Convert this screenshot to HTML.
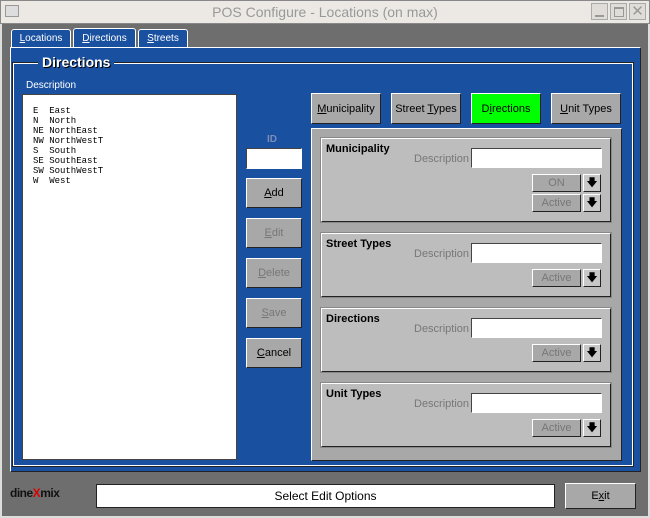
<!DOCTYPE html><html><head><style>
*{box-sizing:border-box;margin:0;padding:0}
body{width:650px;height:518px;overflow:hidden;background:#6e6e6e;font-family:"Liberation Sans",sans-serif;position:relative}
.a{position:absolute}
.btn{position:absolute;background:#a8a8a8;border:1px solid;border-color:#fff #222 #222 #fff;font-size:11px;text-align:center;color:#000;display:flex;align-items:center;justify-content:center}
.dis{color:#777}
.inp{position:absolute;background:#fff;border:1px solid;border-color:#444 #fff #fff #444}
.sec{position:absolute;left:321px;width:290px;border:1px solid;border-color:#fff #222 #222 #fff;background:#bdbdbd;outline:1px solid #888}
.sec b{position:absolute;left:4px;top:4px;font-size:11px}
.sec .d{position:absolute;left:92px;font-size:11px;color:#777}
.arr{position:absolute;width:18px;height:18px;background:#c8c8c8;border:1px solid;border-color:#fff #222 #222 #fff;font-size:11px;text-align:center;line-height:16px}
u{text-decoration:underline}
</style></head><body>
<div class="a" style="left:0;top:0;width:650px;height:24px;background:#ece9e4;border:1px solid #888"></div>
<div class="a" style="left:5px;top:5px;width:14px;height:12px;border:1px solid #999;background:#ddd"></div>
<div class="a" style="left:0;top:4px;width:650px;text-align:center;font-size:14px;color:#999">POS Configure - Locations (on max)</div>
<div class="a" style="left:591px;top:3px;width:17px;height:17px;border:1px solid #aaa;background:#e0ddd8"><div class="a" style="left:3px;top:11px;width:9px;height:2px;background:#999"></div></div>
<div class="a" style="left:610px;top:3px;width:17px;height:17px;border:1px solid #aaa;background:#e0ddd8"><div class="a" style="left:3px;top:3px;width:10px;height:10px;border:1px solid #999;border-top-width:2px"></div></div>
<div class="a" style="left:629px;top:3px;width:17px;height:17px;border:1px solid #aaa;background:#e0ddd8;color:#999;font-size:15px;text-align:center;line-height:15px">✕</div>
<div class="a" style="left:0;top:24px;width:2px;height:494px;background:#ddd"></div>
<div class="a" style="left:648px;top:24px;width:2px;height:494px;background:#ddd"></div>
<div class="a" style="left:0;top:516px;width:650px;height:2px;background:#ddd"></div>
<!-- tabs -->
<div class="a" style="left:11px;top:29px;width:60px;height:19px;background:#1a50a0;border:1px solid #fff;border-bottom:none;border-radius:3px 3px 0 0;color:#fff;font-size:10px;text-align:center;line-height:18px"><u>L</u>ocations</div>
<div class="a" style="left:73px;top:28px;width:63px;height:20px;background:#1a50a0;border:1px solid #fff;border-bottom:none;border-radius:3px 3px 0 0;color:#fff;font-size:10px;text-align:center;line-height:20px"><u>D</u>irections</div>
<div class="a" style="left:138px;top:29px;width:50px;height:19px;background:#1a50a0;border:1px solid #fff;border-bottom:none;border-radius:3px 3px 0 0;color:#fff;font-size:10px;text-align:center;line-height:18px"><u>S</u>treets</div>
<div class="a" style="left:10px;top:47px;width:631px;height:425px;background:#1a50a0;border:1px solid #fff;border-right-color:#222;border-bottom-color:#222"></div>
<div class="a" style="left:13px;top:63px;width:620px;height:403px;border:1px solid #fff;outline:1px solid #222"></div>
<div class="a" style="left:38px;top:54px;background:#1a50a0;padding:0 4px;color:#fff;font-weight:bold;font-size:14px;text-shadow:1px 1px 0 #000">Directions</div>
<div class="a" style="left:26px;top:80px;color:#fff;font-size:10px">Description</div>
<div class="a" style="left:22px;top:94px;width:215px;height:366px;background:#fff;border:1px solid #444;font-family:'Liberation Mono',monospace;font-size:9px;line-height:10px;padding:11px 0 0 10px;white-space:pre">E  East
N  North
NE NorthEast
NW NorthWestT
S  South
SE SouthEast
SW SouthWestT
W  West</div>
<div class="a" style="left:267px;top:134px;color:#7a8fb8;font-size:10px;font-weight:bold">ID</div>
<div class="inp" style="left:246px;top:148px;width:56px;height:21px"></div>
<div class="btn" style="left:246px;top:178px;width:56px;height:30px"><span><u>A</u>dd</span></div>
<div class="btn dis" style="left:246px;top:218px;width:56px;height:30px"><span><u>E</u>dit</span></div>
<div class="btn dis" style="left:246px;top:258px;width:56px;height:30px"><span><u>D</u>elete</span></div>
<div class="btn dis" style="left:246px;top:298px;width:56px;height:30px"><span><u>S</u>ave</span></div>
<div class="btn" style="left:246px;top:338px;width:56px;height:30px"><span><u>C</u>ancel</span></div>
<div class="btn" style="left:311px;top:93px;width:70px;height:31px"><span><u>M</u>unicipality</span></div>
<div class="btn" style="left:391px;top:93px;width:70px;height:31px"><span>Street <u>T</u>ypes</span></div>
<div class="btn" style="left:471px;top:93px;width:70px;height:31px;background:#00ff00"><span>D<u>i</u>rections</span></div>
<div class="btn" style="left:551px;top:93px;width:70px;height:31px"><span><u>U</u>nit Types</span></div>
<div class="a" style="left:311px;top:128px;width:311px;height:333px;background:#a8a8a8;border:1px solid;border-color:#fff #222 #222 #fff"></div>
<div class="sec" style="top:138px;height:84px"><b>Municipality</b><div class="d" style="top:14px">Description</div><div class="inp" style="left:149px;top:9px;width:131px;height:20px"></div>
<div class="btn dis" style="left:210px;top:35px;width:49px;height:18px">ON</div><div class="arr" style="left:261px;top:35px">🡇</div>
<div class="btn dis" style="left:210px;top:55px;width:49px;height:18px">Active</div><div class="arr" style="left:261px;top:55px">🡇</div></div>
<div class="sec" style="top:233px;height:64px"><b>Street Types</b><div class="d" style="top:14px">Description</div><div class="inp" style="left:149px;top:9px;width:131px;height:20px"></div>
<div class="btn dis" style="left:210px;top:35px;width:49px;height:18px">Active</div><div class="arr" style="left:261px;top:35px">🡇</div></div>
<div class="sec" style="top:308px;height:64px"><b>Directions</b><div class="d" style="top:14px">Description</div><div class="inp" style="left:149px;top:9px;width:131px;height:20px"></div>
<div class="btn dis" style="left:210px;top:35px;width:49px;height:18px">Active</div><div class="arr" style="left:261px;top:35px">🡇</div></div>
<div class="sec" style="top:383px;height:64px"><b>Unit Types</b><div class="d" style="top:14px">Description</div><div class="inp" style="left:149px;top:9px;width:131px;height:20px"></div>
<div class="btn dis" style="left:210px;top:35px;width:49px;height:18px">Active</div><div class="arr" style="left:261px;top:35px">🡇</div></div>
<div class="a" style="left:10px;top:486px;font-size:12px;font-weight:bold;color:#111;letter-spacing:-0.5px">dine<span style="color:#d00">X</span>mix</div>
<div class="a" style="left:96px;top:484px;width:459px;height:24px;background:#fff;border:1px solid #222;font-size:12px;text-align:center;line-height:22px">Select Edit Options</div>
<div class="btn" style="left:565px;top:483px;width:71px;height:26px;font-size:11px">E<u>x</u>it</div>
</body></html>
